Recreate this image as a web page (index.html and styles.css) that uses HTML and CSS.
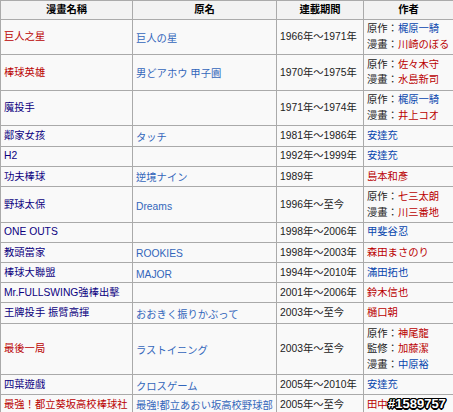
FILE: index.html
```html
<!DOCTYPE html>
<html lang="zh-Hant">
<head>
<meta charset="utf-8">
<title>棒球漫畫</title>
<link rel="stylesheet" href="styles.css">
</head>
<body>
<table class="wikitable">
  <colgroup>
    <col class="c1"><col class="c2"><col class="c3"><col class="c4">
  </colgroup>
  <thead>
    <tr><th>漫畫名稱</th><th>原名</th><th>連載期間</th><th>作者</th></tr>
  </thead>
  <tbody>
    <tr>
      <td><a class="red">巨人之星</a></td>
      <td class="orig"><span class="ja">巨人の星</span></td>
      <td>1966年～1971年</td>
      <td>原作：<a class="blue">梶原一騎</a><br>漫畫：<a class="red">川崎のぼる</a></td>
    </tr>
    <tr>
      <td><a class="red">棒球英雄</a></td>
      <td class="orig"><span class="ja">男どアホウ 甲子園</span></td>
      <td>1970年～1975年</td>
      <td>原作：<a class="red">佐々木守</a><br>漫畫：<a class="red">水島新司</a></td>
    </tr>
    <tr>
      <td><a class="dark">魔投手</a></td>
      <td class="orig"></td>
      <td>1971年～1974年</td>
      <td>原作：<a class="blue">梶原一騎</a><br>漫畫：<a class="red">井上コオ</a></td>
    </tr>
    <tr>
      <td><a class="dark">鄰家女孩</a></td>
      <td class="orig"><span class="ja">タッチ</span></td>
      <td>1981年～1986年</td>
      <td><a class="blue">安達充</a></td>
    </tr>
    <tr>
      <td><a class="dark">H2</a></td>
      <td class="orig"></td>
      <td>1992年～1999年</td>
      <td><a class="blue">安達充</a></td>
    </tr>
    <tr>
      <td><a class="dark">功夫棒球</a></td>
      <td class="orig tall"><span class="ja">逆境ナイン</span></td>
      <td>1989年</td>
      <td><a class="red">島本和彥</a></td>
    </tr>
    <tr>
      <td><a class="dark">野球太保</a></td>
      <td class="orig"><span class="ja">Dreams</span></td>
      <td>1996年～至今</td>
      <td>原作：<a class="red">七三太朗</a><br>漫畫：<a class="red">川三番地</a></td>
    </tr>
    <tr>
      <td><a class="dark">ONE OUTS</a></td>
      <td class="orig"></td>
      <td>1998年～2006年</td>
      <td><a class="blue">甲斐谷忍</a></td>
    </tr>
    <tr>
      <td><a class="dark">教頭當家</a></td>
      <td class="orig"><span class="ja">ROOKIES</span></td>
      <td>1998年～2003年</td>
      <td><a class="red">森田まさのり</a></td>
    </tr>
    <tr>
      <td><a class="dark">棒球大聯盟</a></td>
      <td class="orig"><span class="ja">MAJOR</span></td>
      <td>1994年～2010年</td>
      <td><a class="blue">滿田拓也</a></td>
    </tr>
    <tr>
      <td><a class="dark">Mr.FULLSWING強棒出擊</a></td>
      <td class="orig"></td>
      <td>2001年～2006年</td>
      <td><a class="red">鈴木信也</a></td>
    </tr>
    <tr>
      <td><a class="dark">王牌投手 振臂高揮</a></td>
      <td class="orig tall"><span class="ja">おおきく振りかぶって</span></td>
      <td>2003年～至今</td>
      <td><a class="red">樋口朝</a></td>
    </tr>
    <tr>
      <td><a class="red">最後一局</a></td>
      <td class="orig"><span class="ja">ラストイニング</span></td>
      <td>2003年～至今</td>
      <td>原作：<a class="red">神尾龍</a><br>監修：<a class="red">加藤潔</a><br>漫畫：<a class="blue">中原裕</a></td>
    </tr>
    <tr>
      <td><a class="dark">四葉遊戲</a></td>
      <td class="orig"><span class="ja">クロスゲーム</span></td>
      <td>2005年～2010年</td>
      <td><a class="blue">安達充</a></td>
    </tr>
    <tr>
      <td><a class="red">最強！都立葵坂高校棒球社</a></td>
      <td class="orig last"><span class="ja">最強!都立あおい坂高校野球部</span></td>
      <td>2005年～至今</td>
      <td><a class="red">田中</a></td>
    </tr>
  </tbody>
</table>
<div class="wm">#1589757</div>
</body>
</html>
```
FILE: styles.css
```css
html, body {
  margin: 0;
  padding: 0;
  background: #ffffff;
}

body {
  position: relative;
  font-family: "Liberation Sans", "Noto Sans CJK TC", sans-serif;
  font-size: 10.3px;
  color: #222222;
  overflow: hidden;
}

.wikitable {
  border-collapse: collapse;
  table-layout: fixed;
  width: 453px;
  background: #f9f9f9;
  color: #222222;
}

.c1 { width: 132px; }
.c2 { width: 144px; }
.c3 { width: 87px; }
.c4 { width: 90px; }

.wikitable th,
.wikitable td {
  border: 1px solid #aaaaaa;
  padding: 1.7px 3px;
  line-height: 15.6px;
  vertical-align: middle;
  text-align: left;
  white-space: nowrap;
  overflow: hidden;
}

.wikitable th {
  background: #f2f2f2;
  text-align: center;
  font-weight: bold;
  color: #000000;
  padding: 1px 3px;
}

.wikitable td.orig {
  padding-top: 3.7px;
  padding-bottom: 0;
}

.wikitable td.tall {
  line-height: 16px;
}

.wikitable td.last {
  padding-top: 2.5px;
  padding-bottom: 1px;
}

.ja {
  font-family: "Liberation Sans", "Noto Sans CJK JP", sans-serif;
  color: #3366bb;
}

a { text-decoration: none; }
.red { color: #ba0000; }
.blue { color: #0645ad; }
.dark { color: #0b0080; }

.wm {
  position: absolute;
  left: 388px;
  top: 396px;
  font-family: "Liberation Sans", sans-serif;
  font-weight: bold;
  font-size: 13px;
  line-height: 15px;
  color: #ffffff;
  text-shadow:
    1px 0 0 #000, -1px 0 0 #000, 0 1px 0 #000, 0 -1px 0 #000,
    1px 1px 0 #000, -1px -1px 0 #000, 1px -1px 0 #000, -1px 1px 0 #000,
    1.5px 0 0 #000, -1.5px 0 0 #000, 0 1.5px 0 #000, 0 -1.5px 0 #000;
}
```
